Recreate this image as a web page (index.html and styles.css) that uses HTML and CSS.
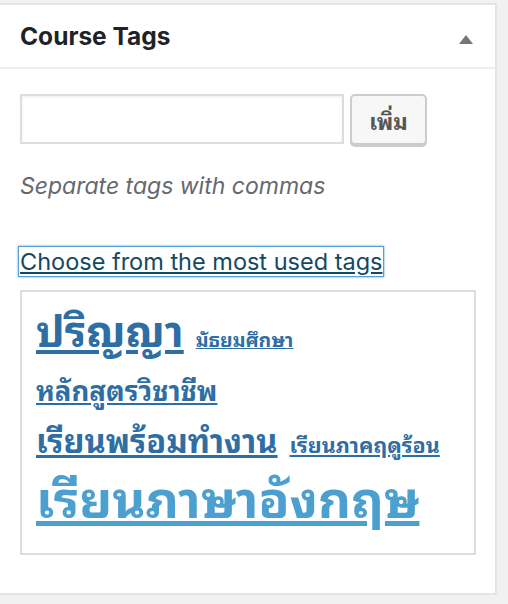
FILE: index.html
```html
<!DOCTYPE html>
<html lang="th">
<head>
<meta charset="utf-8">
<title>Course Tags</title>
<link rel="stylesheet" href="styles.css">
</head>
<body>
<div class="postbox">
  <div class="hndle">
    <h2 class="title">Course Tags</h2>
    <span class="toggle" aria-hidden="true"></span>
  </div>
  <div class="inside">
    <div class="add-row">
      <input class="tag-input" type="text" aria-label="Add tag">
      <button class="btn" type="button">เพิ่ม</button>
    </div>
    <p class="howto">Separate tags with commas</p>
    <p class="cloud-link-wrap"><a class="cloud-link" href="#">Choose from the most used tags</a></p>
    <div class="cloud">
      <a href="#" class="tag t-l">ปริญญา</a>
      <a href="#" class="tag t-s">มัธยมศึกษา</a>
      <a href="#" class="tag t-m">หลักสูตรวิชาชีพ</a>
      <a href="#" class="tag t-ml">เรียนพร้อมทำงาน</a>
      <a href="#" class="tag t-s2">เรียนภาคฤดูร้อน</a>
      <a href="#" class="tag t-xl">เรียนภาษาอังกฤษ</a>
    </div>
  </div>
</div>
</body>
</html>
```
FILE: styles.css
```css
html, body {
  margin: 0;
  padding: 0;
  background: #f1f1f1;
}
body {
  font-family: Inter, "Liberation Sans", "Noto Sans Thai", "Noto Sans", sans-serif;
  color: #3c434a;
}
.postbox {
  width: 497px;
  margin-top: 3px;
  background: #fff;
  border: 2px solid #e4e4e4;
  border-left: 0;
  box-sizing: border-box;
  height: 592px;
}
.hndle {
  height: 62px;
  display: flex;
  align-items: center;
  justify-content: space-between;
  padding: 0 22px 0 20px;
  border-bottom: 2px solid #eeeeee;
}
.title {
  margin: 0;
  font-size: 24.5px;
  font-weight: 700;
  color: #1d2327;
}
.toggle {
  width: 0;
  height: 0;
  margin-top: 6px;
  border-left: 7px solid transparent;
  border-right: 7px solid transparent;
  border-bottom: 9px solid #72777c;
}
.inside {
  padding: 25px 0 0 20px;
}
.add-row {
  display: flex;
  align-items: flex-start;
  gap: 6px;
}
.tag-input {
  width: 324px;
  height: 50px;
  box-sizing: border-box;
  border: 2px solid #dddddd;
  box-shadow: inset 0 1px 3px rgba(0,0,0,0.07);
  margin: 0;
  padding: 0 8px;
  font-size: 20px;
}
.btn {
  width: 77px;
  height: 51px;
  box-sizing: border-box;
  background: #f7f7f7;
  border: 2px solid #cccccc;
  border-radius: 5px;
  box-shadow: 0 2px 0 #cccccc;
  color: #555555;
  font-family: "Noto Sans Thai Looped", "Noto Sans Thai", "Noto Sans", sans-serif;
  font-size: 22px;
  font-weight: 700;
  padding: 0;
  margin: 0;
}
.howto {
  margin: 26px 0 0;
  font-style: italic;
  font-size: 23px;
  color: #646970;
  line-height: 30px;
}
.cloud-link-wrap {
  margin: 48px 0 0;
  line-height: 26px;
}
.cloud-link {
  font-size: 23.5px;
  color: #124964;
  text-decoration: underline;
  outline: 1px solid #5b9dd9;
  box-shadow: 0 0 2px 1px rgba(30,140,190,.8);
  margin-left: -1px;
  padding: 0 1px;
}
.cloud {
  margin-top: 13px;
  width: 456px;
  height: 265px;
  box-sizing: border-box;
  border: 2px solid #dddddd;
  padding: 9px 14px 4px;
  display: flex;
  flex-wrap: wrap;
  align-items: baseline;
  align-content: flex-start;
  column-gap: 12px;
}
.tag {
  color: #2e6ea4;
  text-decoration: underline;
  font-family: "Noto Sans Thai Looped", "Noto Sans Thai", "Noto Sans", sans-serif;
  font-weight: 700;
  white-space: nowrap;
}
.t-s { font-size: 19.5px; line-height: 40px; }
.t-s2 { font-size: 21.5px; line-height: 40px; }
.t-m { font-size: 27.5px; line-height: 61px; }
.t-ml { font-size: 32.5px; line-height: 37px; }
.t-l { font-size: 43px; line-height: 53px; }
.t-xl { font-size: 51px; line-height: 62px; color: #4ba0cf; }
```
